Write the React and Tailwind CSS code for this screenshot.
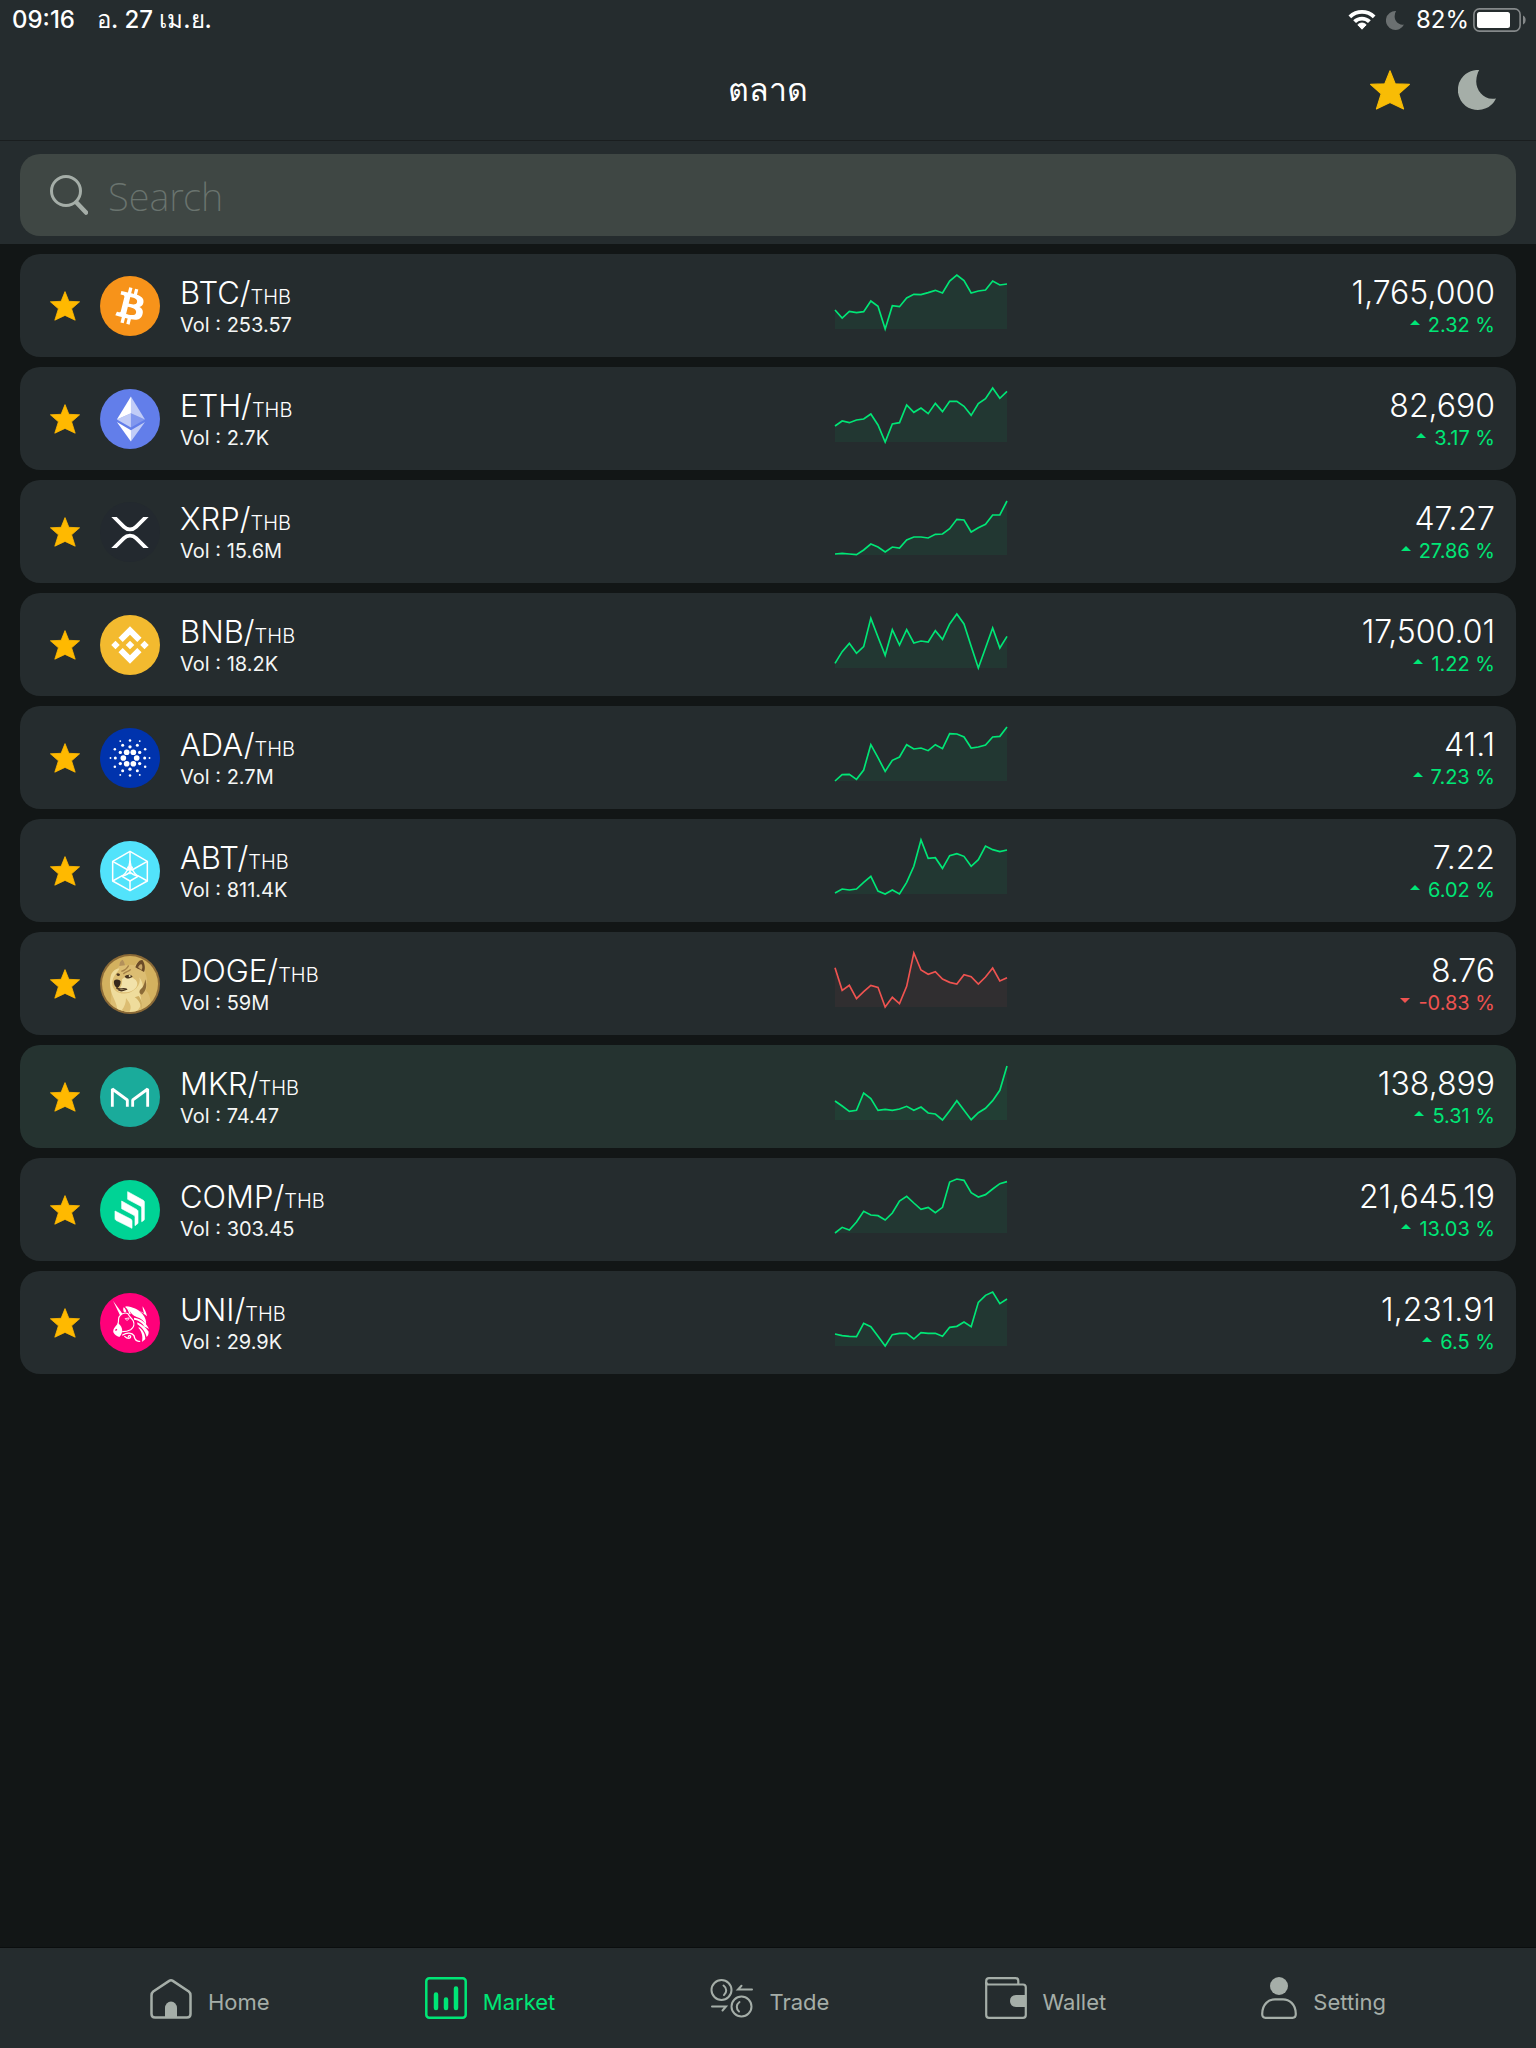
const STAR = 'M15 0.6 L18.9 10.3 L29.6 10.8 L21.6 17.8 L25.2 29.2 L15 24.4 L4.8 29.2 L8.4 17.8 L0.4 10.8 L11.1 10.3 Z';

function Star({ className, fill }) {
  return (
    <svg viewBox="0 0 30 30" className={className} aria-hidden="true">
      <path d={STAR} fill={fill} stroke={fill} strokeWidth="0.8" strokeLinejoin="round" />
    </svg>
  );
}

function Moon({ className }) {
  return (
    <svg viewBox="0 0 38 40" className={className} aria-hidden="true">
      <path d="M21.2 0 A20 20 0 1 0 38 28.4 C26 31 17.500 20 18.300 10.500 C18.500 6.500 19.500 3 21.200 0Z" fill="currentColor" />
    </svg>
  );
}

/* ---------- coin logos ---------- */

function BtcLogo() {
  return (
    <svg viewBox="0 0 32 32" className="size-15">
      <circle cx="16" cy="16" r="16" fill="#f7931a" />
      <path fill="#fff" d="M23.189 14.02c.314-2.096-1.283-3.223-3.465-3.975l.708-2.84-1.728-.43-.69 2.765c-.454-.114-.92-.22-1.385-.326l.695-2.783L15.596 6l-.708 2.839c-.376-.086-.746-.17-1.104-.26l.002-.009-2.384-.595-.46 1.846s1.283.294 1.256.312c.7.175.826.638.805 1.006l-.806 3.235c.048.012.11.03.18.057l-.183-.045-1.13 4.532c-.086.212-.303.531-.793.41.018.025-1.256-.313-1.256-.313l-.858 1.978 2.25.561c.418.105.828.215 1.231.318l-.715 2.872 1.727.43.708-2.84c.472.127.93.245 1.378.357l-.706 2.828 1.728.43.715-2.866c2.948.558 5.164.333 6.097-2.333.752-2.146-.037-3.385-1.588-4.192 1.13-.26 1.98-1.003 2.207-2.538zm-3.95 5.538c-.533 2.147-4.148.986-5.32.695l.95-3.805c1.172.293 4.929.872 4.37 3.11zm.535-5.569c-.487 1.953-3.495.96-4.47.717l.86-3.45c.975.243 4.118.696 3.61 2.733z" />
    </svg>
  );
}

function EthLogo() {
  return (
    <svg viewBox="0 0 32 32" className="size-15">
      <circle cx="16" cy="16" r="16" fill="#627eea" />
      <g fill="#fff">
        <path fillOpacity=".602" d="M16.498 4v8.87l7.497 3.35z" />
        <path d="M16.498 4L9 16.22l7.498-3.35z" />
        <path fillOpacity=".602" d="M16.498 21.968v6.027L24 17.616z" />
        <path d="M16.498 27.995v-6.028L9 17.616z" />
        <path fillOpacity=".2" d="M16.498 20.573l7.497-4.353-7.497-3.348z" />
        <path fillOpacity=".602" d="M9 16.22l7.498 4.353v-7.701z" />
      </g>
    </svg>
  );
}

function XrpLogo() {
  return (
    <svg viewBox="0 0 32 32" className="size-15">
      <circle cx="16" cy="16" r="16" fill="#23292f" />
      <path fill="#fff" d="M23.07 8h2.89l-6.015 5.957a5.621 5.621 0 01-7.89 0L6.035 8H8.93l4.57 4.523a3.556 3.556 0 004.996 0L23.07 8zM8.895 24.563H6l6.055-5.993a5.621 5.621 0 017.89 0L26 24.562h-2.895L18.5 20a3.556 3.556 0 00-4.996 0l-4.61 4.563z" />
    </svg>
  );
}

function BnbLogo() {
  return (
    <svg viewBox="0 0 32 32" className="size-15">
      <circle cx="16" cy="16" r="16" fill="#f3ba2f" />
      <path fill="#fff" d="M12.116 14.404L16 10.52l3.886 3.886 2.26-2.26L16 6l-6.144 6.144 2.26 2.26zM6 16l2.26-2.26L10.52 16l-2.26 2.26L6 16zm6.116 1.596L16 21.48l3.886-3.886 2.26 2.259L16 26l-6.144-6.144-.003-.003 2.263-2.257zM21.48 16l2.26-2.26L26 16l-2.26 2.26L21.48 16zm-3.188-.002h.002V16L16 18.294l-2.291-2.29-.004-.004.004-.003.401-.402.195-.195L16 13.706l2.293 2.293z" />
    </svg>
  );
}

const ADA_RINGS = [
  { radius: 20, r: 8.5, phase: 0 },
  { radius: 33.500, r: 5, phase: 30 },
  { radius: 44, r: 4.500, phase: 0 },
  { radius: 52.500, r: 3.800, phase: 30 },
  { radius: 58.500, r: 2.800, phase: 0 },
];

function AdaLogo() {
  return (
    <svg viewBox="-90 -90 180 180" className="size-15">
      <circle r="90" fill="#0033ad" />
      {ADA_RINGS.map((ring) =>
        [0, 60, 120, 180, 240, 300].map((a) => {
          const t = ((a + ring.phase) * Math.PI) / 180;
          return <circle key={ring.radius + '-' + a} cx={ring.radius * Math.cos(t)} cy={ring.radius * Math.sin(t)} r={ring.r} fill="#fff" />;
        })
      )}
    </svg>
  );
}

function AbtLogo() {
  return (
    <svg viewBox="0 0 180 180" className="size-15">
      <circle cx="90" cy="90" r="90" fill="#52e3fb" />
      <g fill="none" stroke="#fff" strokeWidth="4.500" strokeLinejoin="round">
        <path d="M90 31 L142 61 V120 L90 149 L38 120 V61 Z" />
        <path d="M90 31 V100 M38 61 L84 87 L98 78 M142 61 L96 87 L82 78 M38 120 L68 103 M142 120 L112 103 M90 120 V149" />
        <path d="M90 60 C88 80 78 97 66 106 L90 120 L114 106 C102 97 92 80 90 60 Z" />
        <path d="M66 106 C78 102 84 100 90 93 C96 100 102 102 114 106" />
      </g>
    </svg>
  );
}

function DogeLogo() {
  return (
    <svg viewBox="0 0 180 180" className="size-15">
      <defs>
        <clipPath id="doge-clip">
          <circle cx="90" cy="90" r="84" />
        </clipPath>
      </defs>
      <circle cx="90" cy="90" r="90" fill="#8b6a37" />
      <circle cx="90" cy="90" r="84" fill="#d3b15f" />
      <g clipPath="url(#doge-clip)">
        <path d="M28 180 C30 150 34 140 34 118 C28 100 30 78 38 62 C44 52 52 44 58 36 C58 26 62 18 68 17 C73 22 74 30 75 34 C86 32 96 32 104 34 C110 26 118 18 126 18 C134 26 136 44 136 58 C144 76 142 96 138 110 C150 120 154 140 154 180 Z" fill="#dcbd72" />
        <path d="M58 36 C58 26 62 18 68 17 C73 22 74 30 75 34 Z" fill="#b3905a" />
        <path d="M106 40 C110 28 118 17 127 18 C135 28 137 44 132 54 C126 50 116 46 106 40 Z" fill="#6b4b28" />
        <path d="M114 40 C117 33 122 28 126 32 C128 38 127 44 124 48 Z" fill="#c9a768" />
        <path d="M34 60 C40 50 50 42 58 44 C52 56 42 62 38 78 C32 96 44 112 58 116 C72 122 90 118 102 108 C116 98 122 84 118 70 C132 90 132 106 120 122 C128 140 124 164 104 176 L50 172 C56 150 34 128 32 104 C28 90 30 70 34 60 Z" fill="#efdc9c" />
        <path d="M66 76 C76 66 96 68 104 76 C116 84 114 100 100 108 C86 118 62 116 52 110 C62 104 68 90 66 76 Z" fill="#f2e2aa" />
        <path d="M78 132 C92 150 96 160 88 174 L64 170 C74 158 78 146 78 132 Z" fill="#dcbd72" />
        <path d="M104 130 C114 136 122 146 124 166 C128 150 124 136 116 126 Z" fill="#cfae62" />
        <path d="M70 60 C78 52 88 52 92 46 M64 52 C72 50 82 42 86 34" fill="none" stroke="#a88348" strokeWidth="4" />
        <path d="M74 68 C78 61 92 60 98 67 C92 75 80 76 74 68 Z" fill="#4a3520" />
        <circle cx="89" cy="66" r="3" fill="#f2e2aa" />
        <path d="M49 60 C53 55 60 58 60 63 C57 68 51 67 49 60 Z" fill="#4a3520" />
        <path d="M42 80 C48 74 58 76 62 82 C62 92 58 100 52 102 C44 98 40 88 42 80 Z" fill="#35281c" />
        <path d="M50 102 C58 110 70 100 80 106 M56 108 C62 112 70 110 78 106" fill="none" stroke="#4a3520" strokeWidth="4" strokeLinecap="round" />
        <path d="M136 76 C142 96 138 110 126 122 C118 120 116 112 122 106 C130 100 134 88 136 76 Z" fill="#8b6a37" />
      </g>
    </svg>
  );
}

function MkrLogo() {
  return (
    <svg viewBox="0 0 180 180" className="size-15">
      <circle cx="90" cy="90" r="90" fill="#1aab9b" />
      <path d="M37 119 V66 L82 99 V119 M98 119 V99 L143 66 V119" fill="none" stroke="#fff" strokeWidth="8.500" strokeLinejoin="bevel" />
    </svg>
  );
}

function CompLogo() {
  return (
    <svg viewBox="0 0 180 180" className="size-15">
      <circle cx="90" cy="90" r="90" fill="#00d395" />
      <g fill="#fff" stroke="#fff" strokeWidth="2" strokeLinejoin="round">
        <path d="M83 35 L130 61 Q133 63 133 66 V118 Q133 121 130 122 L125 125 V84 Q125 80 121 78 L83 58 Z" />
        <path d="M65 63 L111 89 Q114 91 114 94 V130 L105 137 V112 Q105 108 102 106 L65 86 Z" />
        <path d="M45 93 L92 117 Q96 119 96 123 V145 L48 121 Q45 119 45 115 Z" />
      </g>
    </svg>
  );
}

function UniLogo() {
  return (
    <svg viewBox="0 0 180 180" className="size-15">
      <circle cx="90" cy="90" r="90" fill="#ff007a" />
      <g fill="#fff">
        <path d="M39 23 L68 63 L60 67 Z" />
        <path d="M71 43 C75 46 78 51 79 56 L72 58 C69 52 69 47 71 43 Z" />
        <path d="M40 118 C38 106 50 98 54 90 L60 96 C66 102 68 112 66 118 C64 124 62 129 58 132 C50 130 44 126 40 118 Z" />
        <path d="M78 40 C98 42 114 48 128 64 C136 74 140 86 138 96 C132 84 124 76 110 72 C98 68 92 58 86 50 Z" />
        <path d="M118 54 C124 56 128 58 132 62 C130 52 127 46 128 40 C134 50 139 58 141 70 C132 62 124 58 118 54 Z" />
        <path d="M102 74 C122 76 140 90 147 108 C144 106 138 102 134 102 C128 90 116 82 102 80 Z" />
        <path d="M112 88 C126 94 138 104 146 116 C146 124 144 128 140 132 C136 114 124 102 112 94 Z" />
        <path d="M116 102 C128 110 136 122 136 138 C132 142 130 144 126 146 C130 130 124 114 116 106 Z" />
      </g>
      <g fill="none" stroke="#fff" strokeLinecap="round" strokeLinejoin="round">
        <path d="M54 92 C58 82 52 74 60 68 C68 60 76 58 84 62 C86 70 94 74 100 84 C104 94 100 104 92 110 C84 114 76 116 68 116" strokeWidth="3.500" />
        <path d="M78 42 C86 46 86 54 90 62" strokeWidth="4" />
        <path d="M76 78 C80 84 86 82 87 76 Z" strokeWidth="2.500" />
        <path d="M68 126 C80 118 96 118 102 128 C104 140 110 146 119 145" strokeWidth="4" />
        <path d="M74 130 C82 138 92 138 92 130 C90 126 84 128 85 132" strokeWidth="3.500" />
      </g>
      <path d="M46 112 L51 109" fill="none" stroke="#ff007a" strokeWidth="4" />
    </svg>
  );
}

/* ---------- data ---------- */

const COINS = [
  { symbol: 'BTC', Logo: BtcLogo, vol: '253.57', price: '1,765,000', change: '2.32', trend: [105, 129, 109, 113, 110, 78, 94, 162, 92, 95, 69, 58, 59, 53, 46, 54, 18, 0, 17, 54, 48, 45, 18, 30, 27] },
  { symbol: 'ETH', Logo: EthLogo, vol: '2.7K', price: '82,690', change: '3.17', trend: [114, 99, 104, 96, 93, 78, 111, 162, 108, 104, 51, 73, 60, 77, 46, 71, 40, 40, 55, 82, 47, 32, 0, 31, 10] },
  { symbol: 'XRP', Logo: XrpLogo, vol: '15.6M', price: '47.27', change: '27.86', trend: [159, 157, 159, 161, 147, 129, 138, 153, 138, 141, 117, 108, 108, 111, 100, 99, 83, 55, 57, 93, 80, 70, 42, 42, 0] },
  { symbol: 'BNB', Logo: BnbLogo, vol: '18.2K', price: '17,500.01', change: '1.22', trend: [148, 113, 88, 118, 98, 13, 69, 124, 47, 93, 47, 87, 81, 84, 50, 76, 30, 0, 30, 97, 162, 102, 42, 102, 67] },
  { symbol: 'ADA', Logo: AdaLogo, vol: '2.7M', price: '41.1', change: '7.23', trend: [162, 143, 142, 157, 129, 53, 92, 133, 100, 90, 53, 66, 63, 71, 53, 65, 20, 21, 30, 63, 60, 54, 30, 28, 0] },
  { symbol: 'ABT', Logo: AbtLogo, vol: '811.4K', price: '7.22', change: '6.02', trend: [159, 147, 150, 147, 127, 109, 153, 162, 150, 162, 127, 79, 0, 55, 53, 85, 47, 41, 49, 79, 59, 18, 29, 35, 30] },
  { symbol: 'DOGE', Logo: DogeLogo, vol: '59M', price: '8.76', change: '-0.83', down: true, trend: [44, 112, 97, 137, 116, 97, 103, 162, 133, 152, 100, 0, 51, 64, 56, 78, 88, 93, 65, 71, 93, 72, 45, 84, 74] },
  { symbol: 'MKR', Logo: MkrLogo, vol: '74.47', price: '138,899', change: '5.31', flash: true, trend: [105, 120, 136, 133, 81, 98, 133, 130, 133, 129, 121, 133, 123, 141, 144, 162, 134, 104, 133, 161, 140, 127, 104, 73, 0] },
  { symbol: 'COMP', Logo: CompLogo, vol: '303.45', price: '21,645.19', change: '13.03', trend: [162, 145, 153, 129, 97, 108, 110, 123, 102, 66, 52, 72, 91, 85, 101, 85, 9, 0, 4, 41, 54, 47, 30, 14, 8] },
  { symbol: 'UNI', Logo: UniLogo, vol: '29.9K', price: '1,231.91', change: '6.5', trend: [126, 131, 133, 134, 94, 104, 133, 162, 128, 124, 124, 141, 122, 124, 124, 133, 106, 103, 90, 104, 31, 10, 0, 35, 21] },
];

function Sparkline({ values, down }) {
  const color = down ? '#ef5350' : '#00e676';
  const line = values.map((v, i) => `${i * 21.5},${v}`).join(' ');
  return (
    <svg viewBox="0 0 516 162" className="h-[54px] w-[172px] overflow-visible" role="img" aria-label="Price trend">
      <polygon points={`0,162 ${line} 516,162`} fill={color} fillOpacity="0.06" />
      <polyline points={line} fill="none" stroke={color} strokeWidth="5" />
    </svg>
  );
}

function CoinRow({ coin }) {
  const { Logo } = coin;
  return (
    <li className={`grid h-[103px] grid-cols-[8fr_172px_5fr] items-center rounded-[20px] ${coin.flash ? 'bg-[#253330]' : 'bg-[#252c2e]'}`}>
      <div className="flex items-center pl-[30px]">
        <button type="button" aria-label={`Favourite ${coin.symbol}`} className="mr-5 flex size-[30px]">
          <Star className="size-[30px]" fill="#ffb900" />
        </button>
        <Logo />
        <div className="ml-5 pt-0.5">
          <div className="text-[31px] leading-9 font-light text-white">
            {coin.symbol}/<span className="text-[20px] leading-none">THB</span>
          </div>
          <div className="text-[20px] leading-7 text-[#f4f6f5]">Vol : {coin.vol}</div>
        </div>
      </div>
      <div className="flex h-full items-start pt-[21px]">
        <Sparkline values={coin.trend} down={coin.down} />
      </div>
      <div className="pt-0.5 pr-[21px] text-right">
        <div className="text-[32px] leading-9 font-light text-white">{coin.price}</div>
        <div className={`flex items-center justify-end gap-2 text-[20px] leading-7 ${coin.down ? 'text-[#ef5350]' : 'text-[#00e676]'}`}>
          <svg viewBox="0 0 10 5" className={`mb-1 h-[5px] w-[10px] ${coin.down ? 'rotate-180' : ''}`} aria-hidden="true">
            <path d="M0 5 L5 0 L10 5 Z" fill="currentColor" />
          </svg>
          <span>{coin.change} %</span>
        </div>
      </div>
    </li>
  );
}

/* ---------- tab bar ---------- */

function HomeIcon() {
  return (
    <svg viewBox="0 0 42 42" className="size-[42px]" fill="none" stroke="currentColor" strokeWidth="2.500" strokeLinejoin="round">
      <path d="M1.500 18.500 C1.500 16.500 2 15.500 3.200 14.500 L19.200 3.900 C20.500 3 21.500 3 22.800 3.900 L38.800 14.500 C40 15.500 40.500 16.500 40.500 18.500 V37 Q40.500 40.500 37 40.500 H5 Q1.500 40.500 1.500 37 Z" />
      <path d="M15 40.500 V31 A6 6.500 0 0 1 27 31 V40.500 Z" fill="currentColor" stroke="none" />
    </svg>
  );
}

function MarketIcon() {
  return (
    <svg viewBox="0 0 42 42" className="size-[42px]" fill="none" stroke="currentColor">
      <rect x="1.300" y="1.300" width="39.400" height="39.400" rx="3" strokeWidth="2.500" />
      <path d="M11 17.500 V31 M21 22.500 V31 M31 11.500 V31" strokeWidth="4.500" strokeLinecap="round" />
    </svg>
  );
}

function TradeIcon() {
  return (
    <svg viewBox="0 0 43 42" className="h-[42px] w-[43px]" fill="none" stroke="currentColor" strokeWidth="2" strokeLinecap="round">
      <circle cx="11.500" cy="13" r="10" />
      <circle cx="31.500" cy="29.500" r="10" />
      <path d="M13.500 8.500 C17 11 17 15.500 14 18" />
      <path d="M29.500 25 C26 27.500 26 32 29 34.500" />
      <path d="M42 12.500 H28 L31.500 8.800" />
      <path d="M2 29.500 H16 L12.500 33.500" />
    </svg>
  );
}

function WalletIcon() {
  return (
    <svg viewBox="0 0 42 42" className="size-[42px]" fill="none" stroke="currentColor" strokeWidth="2.200" strokeLinejoin="round">
      <path d="M1.200 7.500 V4 Q1.200 1.200 4 1.200 H30.500 Q33.300 1.200 33.300 4 V7.500" />
      <path d="M1.200 6 V38 Q1.200 40.800 4 40.800 H38 Q40.800 40.800 40.800 38 V10.300 Q40.800 7.500 38 7.500 H3.500 Q1.200 7.500 1.200 5" />
      <path d="M41 18 H31 Q25 18.500 25 24 Q25 29.500 31 30 H41 Z" fill="currentColor" stroke="none" />
    </svg>
  );
}

function SettingIcon() {
  return (
    <svg viewBox="0 0 36 42" className="h-[42px] w-9" fill="none" stroke="currentColor" strokeWidth="2.200">
      <circle cx="18" cy="9" r="9" fill="currentColor" stroke="none" />
      <path d="M1.200 37 C1.200 27 8 22.300 14 22.300 H22 C28 22.300 34.800 27 34.800 37 Q34.800 40.800 31.500 40.800 H4.500 Q1.200 40.800 1.200 37 Z" />
    </svg>
  );
}

const TABS = [
  { label: 'Home', Icon: HomeIcon },
  { label: 'Market', Icon: MarketIcon, active: true },
  { label: 'Trade', Icon: TradeIcon },
  { label: 'Wallet', Icon: WalletIcon },
  { label: 'Setting', Icon: SettingIcon },
];

export default function App() {
  return (
    <div className="flex min-h-screen flex-col bg-[#121616] font-['Inter','Noto_Sans',sans-serif]">
      <header className="bg-[#252c2e]">
        <div className="flex h-10 items-center justify-between pr-2.5 pl-3 text-[24px] leading-7 text-white">
          <div className="flex gap-[22px] font-medium">
            <span>09:16</span>
            <span>อ. 27 เม.ย.</span>
          </div>
          <div className="flex items-center">
            <svg viewBox="0 0 28 20" className="h-5 w-7" fill="#fff" aria-hidden="true">
              <path d="M0.500 5.500 C8 -1.800 20 -1.800 27.500 5.500 L24.800 8.200 C18.700 2.300 9.300 2.300 3.200 8.200 Z" />
              <path d="M5.200 10.200 C10 5.500 18 5.500 22.800 10.200 L20 13 C16.500 9.700 11.500 9.700 8 13 Z" />
              <path d="M9.800 14.800 C12.200 12.500 15.800 12.500 18.200 14.800 L14 19.200 Z" strokeLinejoin="round" stroke="#fff" />
            </svg>
            <Moon className="mr-3 ml-2.5 h-[19px] w-[18px] text-[#6b7071]" />
            <span>82%</span>
            <svg viewBox="0 0 53 24" className="ml-1 h-6 w-[53px]" aria-hidden="true">
              <rect x="0.900" y="0.900" width="46.200" height="22.200" rx="5.500" fill="none" stroke="#85898a" strokeWidth="1.600" />
              <rect x="4" y="4" width="33" height="16" rx="2.500" fill="#fff" />
              <path d="M50 7.500 C53.500 9 53.500 15 50 16.500 Z" fill="#85898a" />
            </svg>
          </div>
        </div>
        <div className="grid h-[101px] grid-cols-[1fr_auto_1fr] items-center border-b border-[#1a1e1f] px-10">
          <h1 className="col-start-2 text-[32px] leading-10 font-extralight text-white">ตลาด</h1>
          <div className="flex items-center justify-end gap-12">
            <button type="button" aria-label="Favourites" className="flex">
              <Star className="size-10" fill="#f8bc05" />
            </button>
            <button type="button" aria-label="Dark mode" className="flex text-[#a5aea8]">
              <Moon className="h-10 w-[38px]" />
            </button>
          </div>
        </div>
        <div className="px-5 pt-[13px] pb-2">
          <label className="flex h-[82px] items-center rounded-[20px] bg-[#3f4744] pl-[30px]">
            <svg viewBox="0 0 38 40" className="mr-5 h-10 w-[38px]" fill="none" stroke="#a5aea8" strokeLinecap="round" aria-hidden="true">
              <circle cx="16" cy="16" r="14.500" strokeWidth="3" />
              <path d="M26.500 27.500 L36 37.500" strokeWidth="4.500" />
            </svg>
            <input
              type="search"
              aria-label="Search"
              placeholder="Search"
              className="min-w-0 flex-1 bg-transparent pt-0.5 font-['Noto_Sans','Open_Sans',sans-serif] text-[38px] font-extralight text-white outline-none placeholder:text-[#6a746f]"
            />
          </label>
        </div>
      </header>

      <main className="flex-1 px-5 pt-2.5 pb-10">
        <ul className="flex flex-col gap-2.5">
          {COINS.map((coin) => (
            <CoinRow key={coin.symbol} coin={coin} />
          ))}
        </ul>
      </main>

      <nav className="flex h-[101px] items-center justify-between border-t border-[#0b0e0e] bg-[#252c2e] px-[150px]">
        {TABS.map(({ label, Icon, active }) => (
          <a key={label} href={`#${label.toLowerCase()}`} className={`flex items-center gap-4 ${active ? 'text-[#00e676]' : 'text-[#a5aea8]'}`}>
            <Icon />
            <span className="pt-2 text-[22px] leading-7">{label}</span>
          </a>
        ))}
      </nav>
    </div>
  );
}
